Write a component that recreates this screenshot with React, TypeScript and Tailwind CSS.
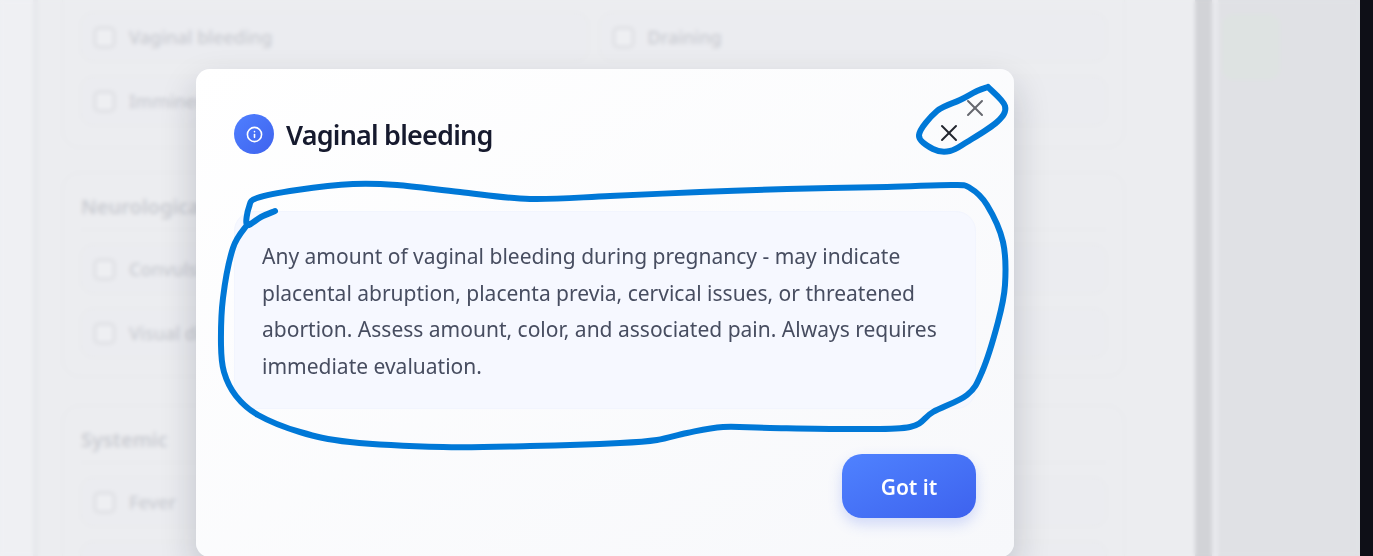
import { Info, X } from "lucide-react";

const FONT = "font-['Noto_Sans',sans-serif]";

const annotation: [number, number][] = [
  [275, 211], [261, 217], [247, 225], [249, 207], [257, 198], [297, 190], [353, 184], [397, 185], [460, 192],
  [530, 199], [610, 196], [700, 192], [787, 189], [887, 187], [953, 185], [970, 188], [987, 205],
  [1003, 242], [1005, 285], [998, 322], [982, 372], [967, 395], [933, 412], [910, 427], [853, 429],
  [770, 428], [723, 427], [687, 433], [657, 440], [620, 443], [530, 446], [443, 447], [350, 442], [300, 432],
  [258, 415], [236, 396], [224, 372], [221, 345], [223, 298], [233, 248], [247, 225],
];
const closeLoop: [number, number][] = [
  [988, 87], [1005, 106], [997, 122], [967, 142], [950, 151], [933, 149], [919, 135], [937, 111], [960, 100], [977, 91], [988, 87],
];
function smooth(p: [number, number][]) {
  let d = `M${p[0][0]} ${p[0][1]}`;
  for (let i = 0; i < p.length - 1; i++) {
    const a = p[Math.max(i - 1, 0)], b = p[i], c = p[i + 1], e = p[Math.min(i + 2, p.length - 1)];
    d += ` C${b[0] + (c[0] - a[0]) / 6} ${b[1] + (c[1] - a[1]) / 6} ${c[0] - (e[0] - b[0]) / 6} ${c[1] - (e[1] - b[1]) / 6} ${c[0]} ${c[1]}`;
  }
  return d;
}

function Row({ label }: { label: string }) {
  return (
    <div className="flex h-[50px] flex-1 items-center gap-[14px] rounded-[14px] border border-[#e7e8ec] bg-[#ebecf0] px-[13px]">
      <span className="h-[21px] w-[21px] shrink-0 rounded-[5px] border-2 border-[#d8d9de] bg-[#eeeff2]" />
      <span className="text-[18px] font-medium whitespace-nowrap text-[#c9cbd1]">{label}</span>
    </div>
  );
}

function Section({ title, rows, cls }: { title?: string; rows: [string, string][]; cls: string }) {
  return (
    <section className={`shrink-0 rounded-[18px] border border-[#e7e8ec] px-[17px] ${cls}`}>
      {title && (
        <h3 className="mb-[14px] border-b border-[#e7e8ec] pb-[7px] pl-[1px] text-[20px] leading-[30px] font-semibold text-[#c9cbd1]">{title}</h3>
      )}
      <div className="flex flex-col gap-[14px]">
        {rows.map(([a, b], i) => (
          <div key={i} className="flex gap-[10px]">
            <Row label={a} />
            <Row label={b} />
          </div>
        ))}
      </div>
    </section>
  );
}

export default function App() {
  return (
    <div className={`relative flex h-[556px] w-full overflow-hidden bg-[#0e0f17] ${FONT}`}>
      <div className="flex h-full min-w-0 flex-1">
        <div className="w-[33px] shrink-0 border-r-[5px] border-[#e6e8ec] bg-[#eff0f3] box-content" />
        <main className="flex w-[1157px] shrink-0 flex-col bg-[#ecedf0] pl-[24px] pr-[70px] -mt-[28px]">
          <Section
            cls="pt-[39px] pb-[21px]"
            rows={[["Vaginal bleeding", "Draining"], ["Imminent delivery", ""]]}
          />
          <Section
            title="Neurological"
            cls="mt-[24px] pt-[19px] pb-[18px]"
            rows={[["Convulsions", ""], ["Visual disturbance", ""]]}
          />
          <Section title="Systemic" cls="mt-[28px] pt-[19px] pb-[18px]" rows={[["Fever", ""], ["", ""]]} />
        </main>
        <div className="w-[17px] shrink-0 bg-[#d2d3d7]" />
        <div className="w-[6px] shrink-0 bg-[#e9eaee]" />
        <aside className="w-[142px] shrink-0 bg-[#e0e1e5] pt-[14px] pl-[4px]">
          <div className="h-[66px] w-[58px] rounded-[12px] bg-[#dee3e2]" />
        </aside>
      </div>
      <div className="w-[13px] shrink-0 bg-[#0e0f17]" />

      <div className="absolute top-0 bottom-0 left-0 w-[1360px] backdrop-blur-[2px]" />

      <div className="absolute top-[69px] left-[196px] flex h-[488px] w-[818px] flex-col rounded-[14px] bg-gradient-to-br from-white to-[#f7f8fb] px-[38px] pt-[45px] shadow-[0_16px_36px_rgba(20,25,45,0.2)]">
        <div className="flex items-center gap-[12px]">
          <div className="flex h-[40px] w-[40px] items-center justify-center rounded-full bg-gradient-to-br from-[#4f7fff] to-[#3f63ee]">
            <Info size={17} strokeWidth={2.25} className="text-white" />
          </div>
          <h2 className="pt-[1px] text-[27px] leading-[39px] font-semibold tracking-[-0.8px] text-[#161a2e]">Vaginal bleeding</h2>
        </div>
        <div className="mt-[57px] h-[198px] rounded-[20px] border border-[#f2f5fe] bg-[#f6f8ff] px-[27px] pt-[26px]">
          <p className="text-[21px] leading-[36.6px] text-[#474d60]">
            Any amount of vaginal bleeding during pregnancy - may indicate placental abruption, placenta previa, cervical
            issues, or threatened abortion. Assess amount, color, and associated pain. Always requires immediate evaluation.
          </p>
        </div>
        <div className="mt-[45px] flex justify-end">
          <button className="h-[64px] w-[134px] rounded-[20px] bg-gradient-to-br from-[#4f82ff] to-[#3e62ee] pt-[3px] text-[21px] font-semibold text-white shadow-[0_6px_14px_rgba(63,99,238,0.22)]">
            Got it
          </button>
        </div>
        <X size={28} strokeWidth={1.7} className="absolute top-[25px] right-[25px] text-[#66686f]" />
        <X size={28} strokeWidth={1.7} className="absolute top-[50px] right-[51px] text-[#22252e]" />
      </div>

      <svg className="pointer-events-none absolute inset-0" width="1373" height="556" fill="none" stroke="#0078d7" strokeWidth="6" strokeLinecap="round" strokeLinejoin="round">
        <path d={smooth(annotation)} />
        <path d={smooth(closeLoop)} />
      </svg>
    </div>
  );
}
